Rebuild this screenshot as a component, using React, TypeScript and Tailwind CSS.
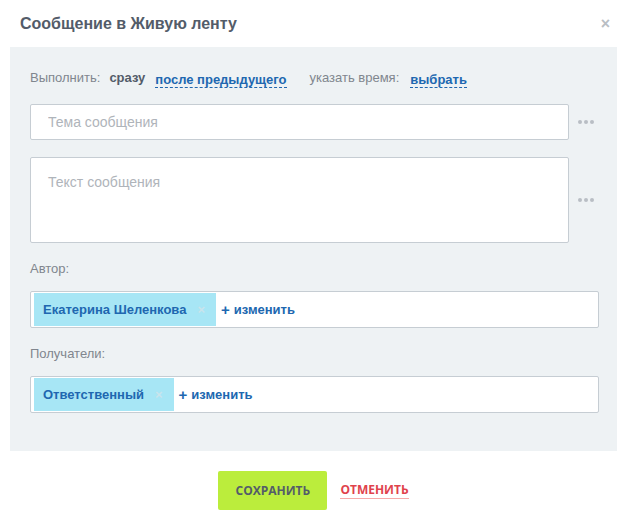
import { useState } from 'react'

const SANS = { fontFamily: '"Liberation Sans", Arial, sans-serif' }
const BTN = { fontFamily: '"Open Sans", "Liberation Sans", sans-serif' }

function Dots() {
  return (
    <div className="w-[34px] shrink-0 flex items-center justify-center gap-[2px]">
      <span className="w-[4px] h-[4px] rounded-full bg-[#b9bec4]" />
      <span className="w-[4px] h-[4px] rounded-full bg-[#b9bec4]" />
      <span className="w-[4px] h-[4px] rounded-full bg-[#b9bec4]" />
    </div>
  )
}

function Chip({ label }: { label: string }) {
  return (
    <div className="h-[33px] bg-[#a7e6f5] flex items-center pl-[9px] pr-[11px]">
      <span className="text-[13px] font-bold text-[#2067b0]">{label}</span>
      <span className="ml-[11px] text-[13px] font-bold leading-none text-[#c9e4ec]">×</span>
    </div>
  )
}

function Picker({ label, chip }: { label: string; chip: string }) {
  return (
    <>
      <p className="mt-[17px] text-[13px] leading-[18px] text-[#80868e]">{label}</p>
      <div className="mt-[13px] w-[569px] h-[37px] bg-white border border-[#c6cdd3] rounded-[2px] flex items-center px-[3px]">
        <Chip label={chip} />
        <button className="ml-[5px] flex items-center gap-[4px] text-[13px] font-bold text-[#2067b0]">
          <span className="text-[15px] leading-none">+</span>
          изменить
        </button>
      </div>
    </>
  )
}

export default function App() {
  const [subject, setSubject] = useState('')
  const [text, setText] = useState('')

  return (
    <div className="w-[627px] h-[528px] bg-white" style={SANS}>
      {/* Header */}
      <div className="h-[47px] flex items-center justify-between pl-[20px] pr-[17px]">
        <h1 className="text-[16px] font-bold text-[#535c69]">Сообщение в Живую ленту</h1>
        <span className="text-[16px] font-bold text-[#b9bec4] leading-none">×</span>
      </div>

      {/* Body */}
      <div className="mx-[10px] bg-[#eef2f4] pl-[20px] pr-[21px] pt-[21px] pb-[38px]">
        <div className="flex items-center h-[20px] text-[13px]">
          <span className="text-[#80868e]">Выполнить:</span>
          <span className="ml-[9px] font-bold text-[#535c69]">сразу</span>
          <span className="ml-[10px] font-bold text-[#2067b0] border-b border-dashed border-[#2067b0] leading-[15px] mt-[4px]">после предыдущего</span>
          <span className="ml-[23px] text-[#80868e]">указать время:</span>
          <span className="ml-[11px] font-bold text-[#2067b0] border-b border-dashed border-[#2067b0] leading-[15px] mt-[4px]">выбрать</span>
        </div>

        <div className="mt-[16px] flex items-center">
          <input
            value={subject}
            onChange={e => setSubject(e.target.value)}
            placeholder="Тема сообщения"
            className="w-[539px] shrink-0 h-[36px] bg-white border border-[#c6cdd3] rounded-[2px] px-[17px] text-[14px] text-[#535c69] placeholder:text-[#afb4ba] outline-none"
          />
          <Dots />
        </div>

        <div className="mt-[17px] flex items-center">
          <textarea
            value={text}
            onChange={e => setText(e.target.value)}
            placeholder="Текст сообщения"
            className="w-[539px] shrink-0 h-[86px] bg-white border border-[#c6cdd3] rounded-[2px] px-[17px] pt-[14px] text-[14px] text-[#535c69] placeholder:text-[#afb4ba] outline-none resize-none block"
          />
          <Dots />
        </div>

        <Picker label="Автор:" chip="Екатерина Шеленкова" />
        <Picker label="Получатели:" chip="Ответственный" />
      </div>

      {/* Footer */}
      <div className="flex items-center justify-center gap-[13px] pt-[20px]" style={BTN}>
        <button className="w-[109px] h-[39px] bg-[#bbed3c] rounded-[2px] text-[12px] font-bold text-[#535c69]">
          СОХРАНИТЬ
        </button>
        <button className="text-[12px] font-bold text-[#e0424c] border-b border-[#f5a9a9] leading-[16px]">
          ОТМЕНИТЬ
        </button>
      </div>
    </div>
  )
}
